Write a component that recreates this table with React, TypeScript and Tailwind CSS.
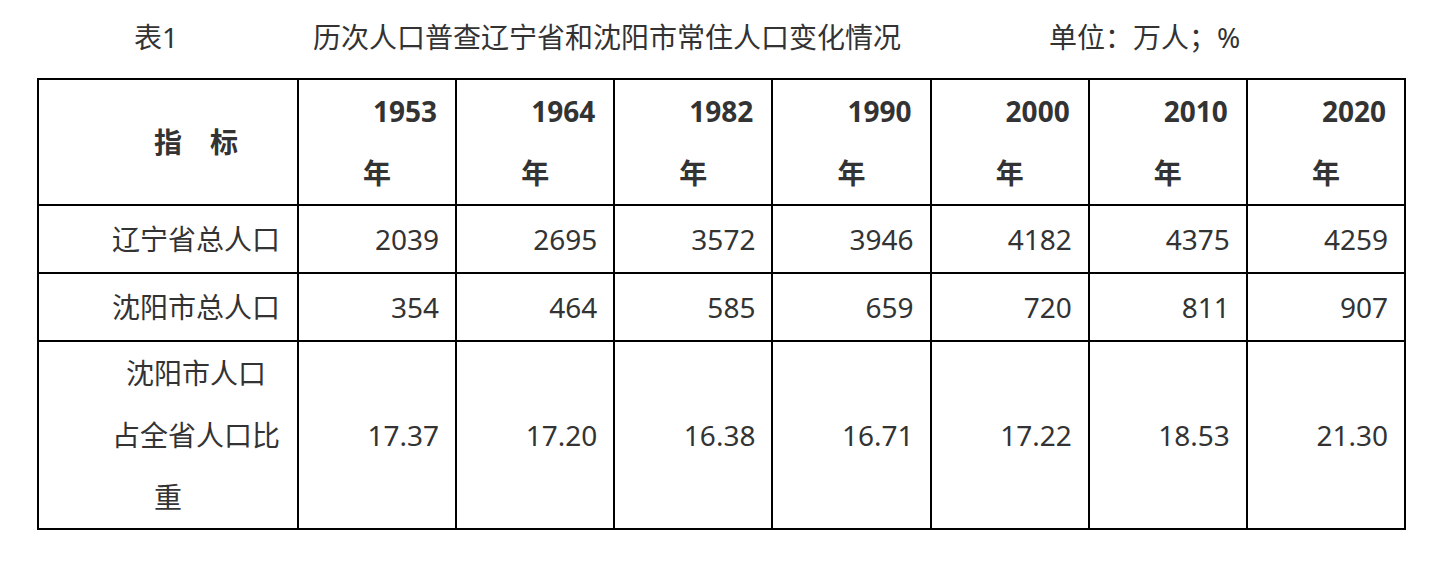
const years = ["1953", "1964", "1982", "1990", "2000", "2010", "2020"];

const rows: { label: React.ReactNode; values: string[]; h: string }[] = [
  {
    label: <p className="indent-[2em]">辽宁省总人口</p>,
    values: ["2039", "2695", "3572", "3946", "4182", "4375", "4259"],
    h: "h-[68px]",
  },
  {
    label: <p className="indent-[2em]">沈阳市总人口</p>,
    values: ["354", "464", "585", "659", "720", "811", "907"],
    h: "h-[68px]",
  },
  {
    label: (
      <>
        <p className="indent-[2em]">沈阳市人口</p>
        <p className="indent-[2em]">
          占全省人口比
          <br />
          重
        </p>
      </>
    ),
    values: ["17.37", "17.20", "16.38", "16.71", "17.22", "18.53", "21.30"],
    h: "h-[188px]",
  },
];

const cell = "border-2 border-black p-0 align-middle";

export default function App() {
  return (
    <div
      className="h-[568px] w-[1443px] bg-white text-[#333] text-[28px] leading-[62px]"
      style={{ fontFamily: '"Noto Sans", "Noto Sans CJK SC", sans-serif' }}
    >
      <div className="flex h-[78px] items-center pb-[4px] leading-none">
        <span className="ml-[134px]">表1</span>
        <span className="ml-[135px]">历次人口普查辽宁省和沈阳市常住人口变化情况</span>
        <span className="ml-[148px]">单位：万人；%</span>
      </div>
      <table className="ml-[37px] w-[1369px] table-fixed border-collapse">
        <colgroup>
          <col className="w-[260px]" />
          {years.map((y) => (
            <col key={y} />
          ))}
        </colgroup>
        <tbody>
          <tr className="h-[125px]">
            <td className={cell + " text-center font-bold"}>
              <p className="indent-[2em]">指　标</p>
            </td>
            {years.map((y) => (
              <td key={y} className={cell + " text-center font-bold"}>
                <p className="indent-[2em]">
                  {y}
                  <br />年
                </p>
              </td>
            ))}
          </tr>
          {rows.map((r, i) => (
            <tr key={i} className={r.h}>
              <td className={cell + " text-center"}>{r.label}</td>
              {r.values.map((v, j) => (
                <td key={j} className={cell + " pr-[16px] text-right"}>
                  {v}
                </td>
              ))}
            </tr>
          ))}
        </tbody>
      </table>
    </div>
  );
}
